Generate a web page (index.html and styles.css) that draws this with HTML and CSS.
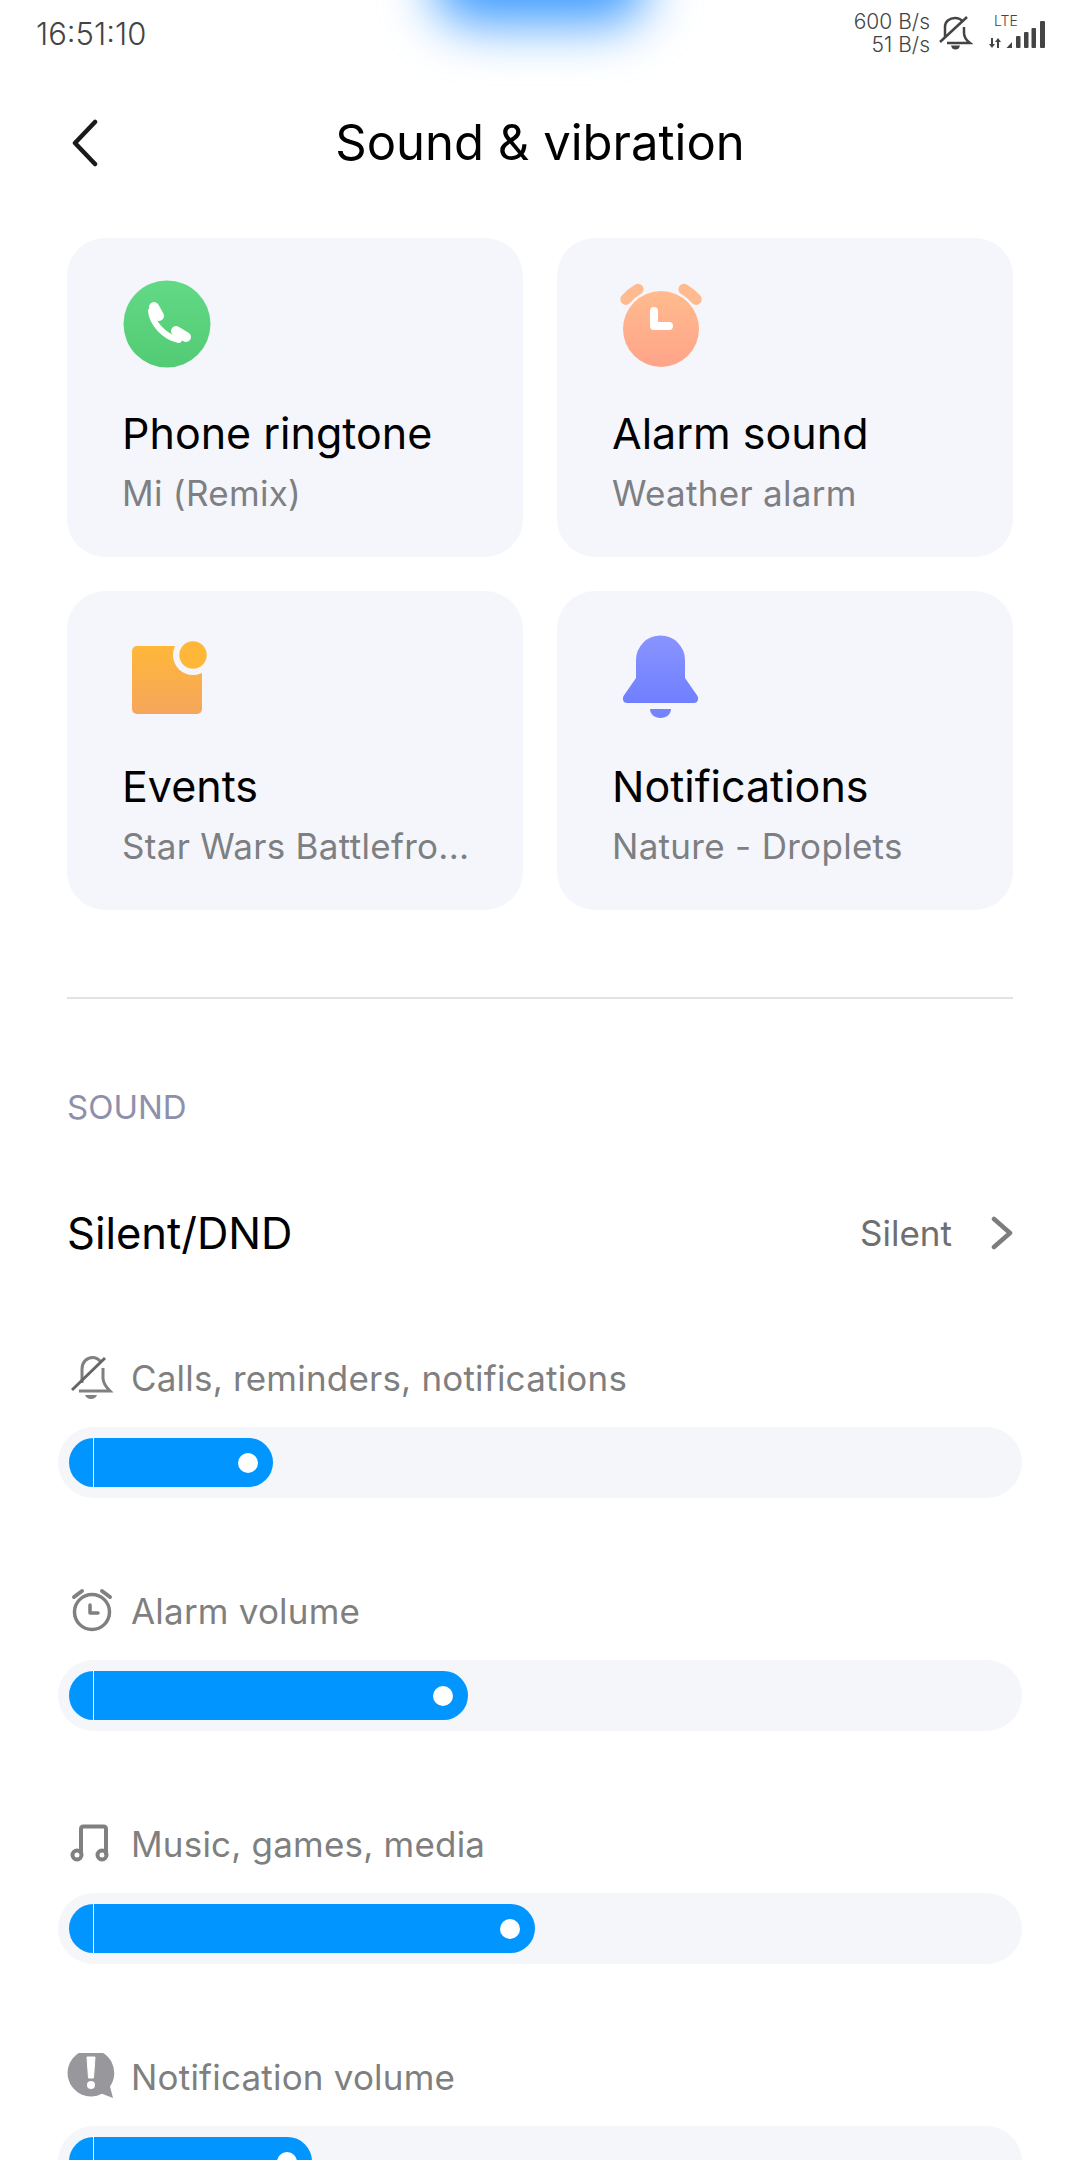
FILE: index.html
```html
<!DOCTYPE html>
<html lang="en">
    <head>
        <meta charset="UTF-8" />
        <meta name="viewport" content="width=device-width, initial-scale=1.0" />
        <title>Sound &amp; vibration</title>
        <link rel="stylesheet" href="styles.css">
    </head>

    <body>
        <div class="glow"></div>

        <div class="status-bar">
            <span class="clock">16:51:10</span>
            <div class="status-right">
                <div class="net-speed">
                    <span>600 B/s</span>
                    <span>51 B/s</span>
                </div>
                <svg class="status-bell" width="34" height="36" viewBox="0 0 34 36" fill="none" stroke="#444" stroke-width="2.5">
                    <path d="M6 22V12C6 6 11 3 16 3c3 0 6 1 8 4M25 12v6c0 4 2 7 6 10H8" />
                    <path d="M1 27 28 2" />
                    <path d="M12 30.500h9c-1 3-2 4-4.500 4s-3.500-1-4.500-4z" fill="#444" stroke="none" />
                </svg>
                <div class="network">
                    <span class="lte">LTE</span>
                    <svg width="60" height="36" viewBox="0 0 60 36" fill="#444">
                        <path d="M4 23h2v6h2l-3 4-3-4h2zM10 33h2v-6h2l-3-4-3 4h2z" />
                        <path d="M19.500 33 25 27v6z" />
                        <rect x="29" y="21" width="4.500" height="12" rx="1" />
                        <rect x="37" y="17" width="4.500" height="16" rx="1" />
                        <rect x="44.500" y="13" width="4.500" height="20" rx="1" />
                        <rect x="53" y="6" width="5" height="27" rx="1" />
                    </svg>
                </div>
            </div>
        </div>

        <div class="header">
            <svg class="back" width="30" height="48" viewBox="0 0 30 48" fill="none" stroke="#1a1a1a" stroke-width="4.500" stroke-linecap="round" stroke-linejoin="round">
                <path d="M25 3 5 24l20 21" />
            </svg>
            <h1>Sound &amp; vibration</h1>
        </div>

        <div class="cards">
            <div class="card">
                <svg class="card-icon" width="96" height="96" viewBox="0 0 96 96">
                    <defs>
                        <linearGradient id="greenFill" x1="0" y1="0" x2="0" y2="1">
                            <stop offset="0" stop-color="#62d985" />
                            <stop offset="1" stop-color="#53cb74" />
                        </linearGradient>
                    </defs>
                    <circle cx="44" cy="46" r="43.500" fill="url(#greenFill)" />
                    <g fill="none" stroke="#fff" stroke-linecap="round">
                        <path d="M31 29l5 9" stroke-width="10" />
                        <path d="M53 53l10 6" stroke-width="10" />
                        <path d="M28 33c1 12 13 26 28 29" stroke-width="6" />
                    </g>
                </svg>
                <div class="card-title">Phone ringtone</div>
                <div class="card-sub">Mi (Remix)</div>
            </div>

            <div class="card">
                <svg class="card-icon" width="96" height="96" viewBox="0 0 96 96">
                    <defs>
                        <linearGradient id="peachFill" x1="0" y1="0" x2="0" y2="1">
                            <stop offset="0" stop-color="#ffbb8d" />
                            <stop offset="1" stop-color="#ffa48a" />
                        </linearGradient>
                    </defs>
                    <circle cx="48" cy="51" r="38" fill="url(#peachFill)" />
                    <g fill="none" stroke="#ffba8f" stroke-width="11" stroke-linecap="round">
                        <path d="M12.800 21.400A46 46 0 0 1 25 11.200" />
                        <path d="M71 11.200A46 46 0 0 1 83.200 21.400" />
                    </g>
                    <path d="M41 33v15h15" fill="none" stroke="#fff" stroke-width="8" stroke-linecap="round" stroke-linejoin="round" />
                </svg>
                <div class="card-title">Alarm sound</div>
                <div class="card-sub">Weather alarm</div>
            </div>

            <div class="card">
                <svg class="card-icon" width="96" height="96" viewBox="0 0 96 96">
                    <defs>
                        <linearGradient id="orangeFill" x1="0" y1="0" x2="0" y2="1">
                            <stop offset="0" stop-color="#ffb739" />
                            <stop offset="1" stop-color="#f5a65c" />
                        </linearGradient>
                    </defs>
                    <rect x="9" y="15" width="70" height="68" rx="5" fill="url(#orangeFill)" />
                    <circle cx="70" cy="24" r="20" fill="#f4f6fb" />
                    <circle cx="70" cy="24" r="13.700" fill="#ffb739" />
                </svg>
                <div class="card-title">Events</div>
                <div class="card-sub">Star Wars Battlefro...</div>
            </div>

            <div class="card">
                <svg class="card-icon" width="96" height="96" viewBox="0 0 96 96">
                    <defs>
                        <linearGradient id="blueFill" x1="0" y1="0" x2="0" y2="1">
                            <stop offset="0" stop-color="#8a94ff" />
                            <stop offset="1" stop-color="#6f7fff" />
                        </linearGradient>
                    </defs>
                    <path d="M23 29a24.500 24.500 0 0 1 49 0v18l12.500 18c1.500 3.500 0 7-3.500 7H14c-3.500 0-5-3.500-3.500-7L23 47z" fill="url(#blueFill)" />
                    <path d="M37 78h21c0 5-4.500 9-10.500 9S37 83 37 78z" fill="#7484ff" />
                </svg>
                <div class="card-title">Notifications</div>
                <div class="card-sub">Nature - Droplets</div>
            </div>
        </div>

        <div class="divider"></div>

        <div class="section-title">SOUND</div>

        <div class="silent-row">
            <span class="silent-name">Silent/DND</span>
            <div class="silent-value">
                <span>Silent</span>
                <svg width="22" height="34" viewBox="0 0 22 34" fill="none" stroke="#7d7d7d" stroke-width="4.500" stroke-linecap="round" stroke-linejoin="round">
                    <path d="M3 3l16 14L3 31" />
                </svg>
            </div>
        </div>

        <div class="sliders">
            <div class="slider">
                <div class="slider-label">
                    <svg width="50" height="50" viewBox="0 0 50 50" fill="none" stroke="#808080" stroke-width="3">
                        <path d="M15 29V15c0-7 5-11.500 10.500-11.500 3 0 6 1.500 8.500 4.500M36 14v10c0 5 3 9 7 13H12" />
                        <path d="M5 36 38 4" stroke="#666" />
                        <path d="M18 41h12c-.5 2-3 4-6 4s-5.500-2-6-4z" fill="#808080" stroke="none" />
                    </svg>
                    <span>Calls, reminders, notifications</span>
                </div>
                <div class="slider-track">
                    <div class="slider-fill" style="width: 204px"><i class="slider-dot"></i></div>
                </div>
            </div>

            <div class="slider">
                <div class="slider-label">
                    <svg width="50" height="50" viewBox="0 0 50 50" fill="none" stroke="#808080" stroke-width="3.500" stroke-linecap="round">
                        <circle cx="25" cy="25" r="17.500" />
                        <path d="M23 18v8h8" stroke-linejoin="round" />
                        <path d="M7 10l8-6M43 10l-8-6" stroke-width="4" />
                    </svg>
                    <span>Alarm volume</span>
                </div>
                <div class="slider-track">
                    <div class="slider-fill" style="width: 399px"><i class="slider-dot"></i></div>
                </div>
            </div>

            <div class="slider">
                <div class="slider-label">
                    <svg width="50" height="50" viewBox="0 0 50 50" fill="none" stroke="#808080" stroke-width="4" stroke-linejoin="round">
                        <path d="M14 34V9c0-1.500 1-2.500 2.500-2.500h20c1.500 0 2.500 1 2.500 2.500v26" />
                        <circle cx="10" cy="35" r="4.500" />
                        <circle cx="35" cy="35" r="4.500" />
                    </svg>
                    <span>Music, games, media</span>
                </div>
                <div class="slider-track">
                    <div class="slider-fill" style="width: 466px"><i class="slider-dot"></i></div>
                </div>
            </div>

            <div class="slider">
                <div class="slider-label">
                    <svg width="50" height="50" viewBox="0 0 50 50" fill="#98989c">
                        <path d="M24 -3.500a23.500 23.500 0 1 0 11 44.300L46 45l-3-11.500A23.500 23.500 0 0 0 24 -3.500z" />
                        <path d="M20 4h8l-1.500 21h-5z" fill="#fff" stroke="#fff" stroke-width="1" stroke-linejoin="round" />
                        <circle cx="24" cy="32" r="4" fill="#fff" />
                    </svg>
                    <span>Notification volume</span>
                </div>
                <div class="slider-track">
                    <div class="slider-fill" style="width: 243px"><i class="slider-dot"></i></div>
                </div>
            </div>
        </div>
    </body>
</html>
```

FILE: styles.css
```css
html, body {
    height: 2160px;
    overflow: hidden;
}

body {
    font-family: Inter, Roboto, sans-serif;
    margin: 0;
    padding: 0;
    background-color: #fff;
    color: #000;
    position: relative;
}

.glow {
    position: absolute;
    top: -70px;
    left: 433px;
    width: 214px;
    height: 94px;
    border-radius: 40px;
    background-color: #3d9bff;
    filter: blur(26px);
}

/* status bar */
.status-bar {
    height: 66px;
    display: flex;
    justify-content: space-between;
    align-items: center;
    padding: 0 33px 0 36px;
    position: relative;
    color: #444;
}

.clock {
    font-size: 31px;
    font-weight: 300;
}

.status-right {
    display: flex;
    align-items: center;
}

.net-speed {
    display: flex;
    flex-direction: column;
    align-items: flex-end;
    font-size: 21px;
    font-weight: 300;
    line-height: 23px;
}

.status-bell {
    margin: 0 14px 0 9px;
}

.network {
    position: relative;
    width: 60px;
    height: 36px;
}

.lte {
    position: absolute;
    top: -3px;
    left: 7px;
    font-size: 14px;
    font-weight: 300;
}

/* header */
.header {
    height: 172px;
    padding-bottom: 20px;
    box-sizing: border-box;
    position: relative;
    display: flex;
    justify-content: center;
    align-items: center;
}

.back {
    position: absolute;
    left: 70px;
    top: 53px;
}

.header h1 {
    margin: 0;
    font-size: 49px;
    font-weight: 400;
}

/* cards */
.cards {
    display: grid;
    grid-template-columns: 456px 456px;
    grid-auto-rows: 319px;
    gap: 34px;
    margin: 0 67px;
}

.card {
    background-color: #f4f6fb;
    border-radius: 38px;
    padding: 40px 40px 0 56px;
    box-sizing: border-box;
}

.card-icon {
    display: block;
}

.card-title,
.card-sub {
    margin-left: -1px;
}

.card-title {
    font-size: 43px;
    line-height: 56px;
    margin-top: 31px;
}

.card-sub {
    font-size: 35px;
    line-height: 48px;
    margin-top: 8px;
    letter-spacing: 0.3px;
    color: #7d7f82;
}

.divider {
    height: 2px;
    margin: 87px 67px 0;
    background-color: #e3e3e3;
}

.section-title {
    margin: 88px 67px 0;
    height: 40px;
    line-height: 40px;
    font-size: 33px;
    color: #8e90ab;
}

/* silent row */
.silent-row {
    display: flex;
    justify-content: space-between;
    align-items: center;
    height: 80px;
    margin: 66px 67px 0;
}

.silent-name {
    font-size: 43.5px;
}

.silent-value {
    display: flex;
    align-items: center;
    gap: 39px;
    font-size: 35px;
    color: #6f6f6f;
}

/* sliders */
.sliders {
    height: 806px;
    margin-top: 81px;
    overflow: hidden;
}

.slider {
    height: 144px;
    margin-bottom: 89px;
}

.slider-label {
    display: flex;
    align-items: center;
    height: 50px;
    margin: 0 0 23px 67px;
    gap: 14px;
    font-size: 35px;
    letter-spacing: 0.2px;
    color: #7f7f7f;
}

.slider-label span {
    margin-top: -2px;
}

.slider-track {
    display: flex;
    height: 71px;
    margin: 0 58px;
    padding: 11px;
    box-sizing: border-box;
    border-radius: 36px;
    background-color: #f4f6fa;
}

.slider-fill {
    display: flex;
    justify-content: space-between;
    align-items: center;
    height: 49px;
    padding-right: 15px;
    box-sizing: border-box;
    border-radius: 25px;
    background-color: #0095ff;
}

.slider-fill::before {
    content: "";
    width: 24px;
    height: 49px;
    border-right: 1.5px solid #fff;
    box-sizing: content-box;
}

.slider-dot {
    width: 20px;
    height: 20px;
    border-radius: 50%;
    background-color: #fff;
}
```
